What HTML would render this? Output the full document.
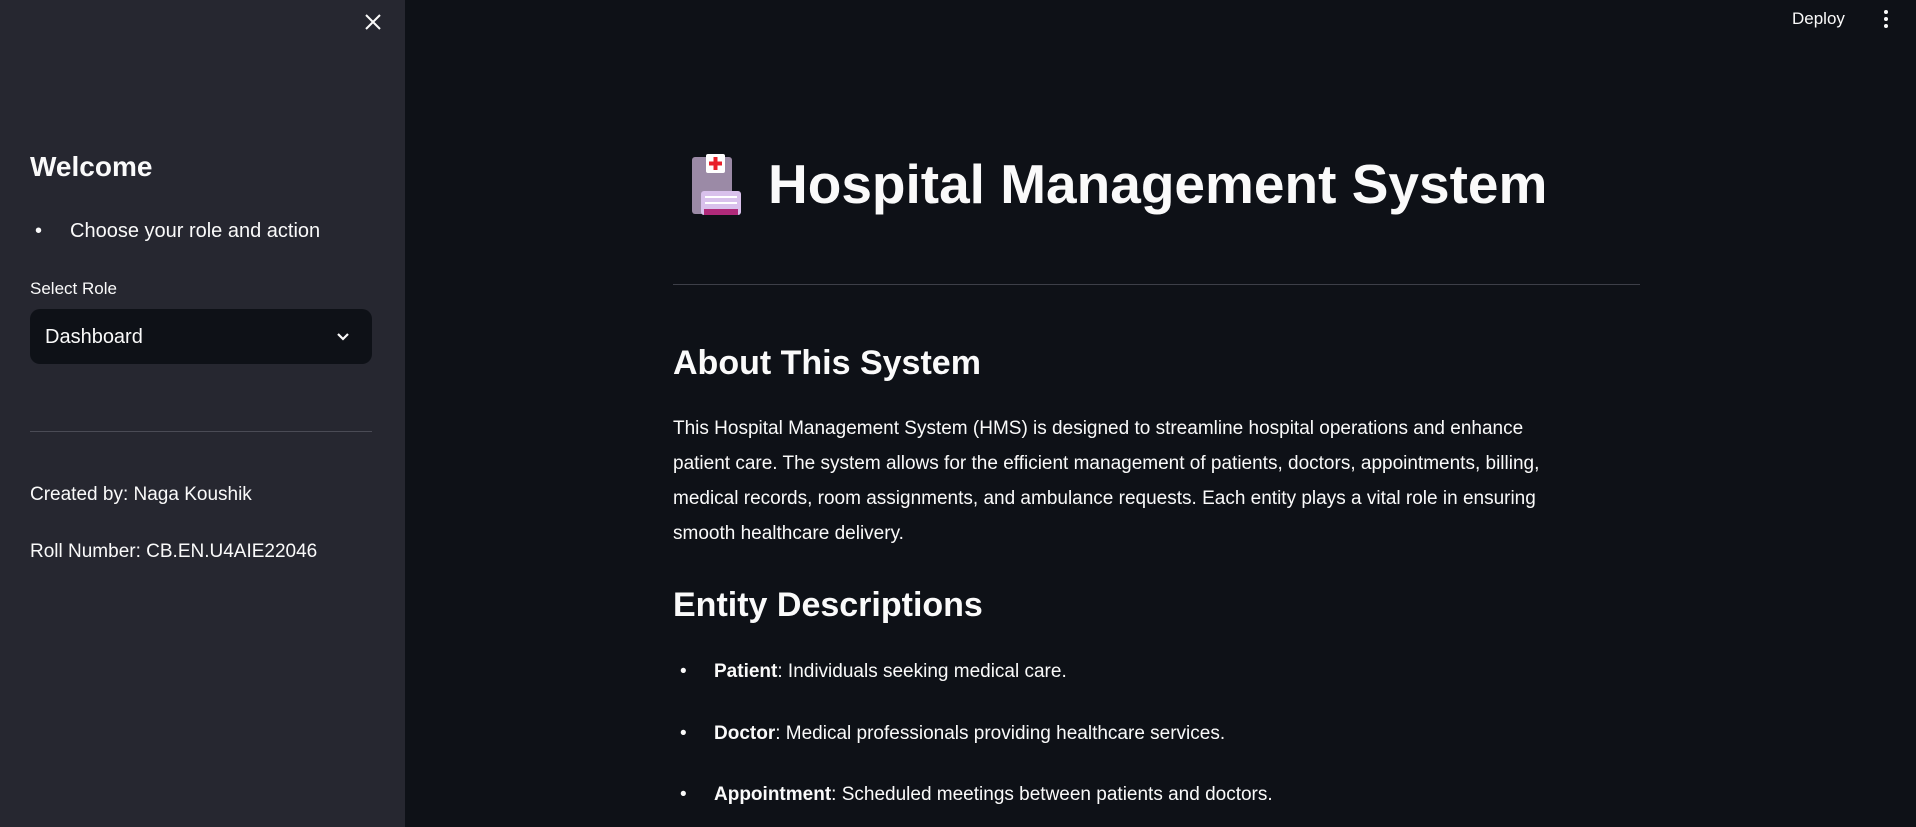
<!DOCTYPE html>
<html><head><meta charset="utf-8"><style>
*{margin:0;padding:0;box-sizing:border-box}
body{width:1916px;height:827px;overflow:hidden;background:#0e1117;color:#fafafa;font-family:"Liberation Sans",sans-serif;position:relative}
.sb{position:absolute;left:0;top:0;width:405px;height:827px;background:#262730}
.a{position:absolute;white-space:nowrap}
p.t{position:absolute;left:673px;width:880px;font-size:19px;line-height:35px}
</style></head><body>
<div class="sb">
<svg class="a" style="left:362px;top:11px" width="22" height="22" viewBox="0 0 22 22"><path d="M4 4L18 18M18 4L4 18" stroke="#fafafa" stroke-width="2"/></svg>
<div class="a" style="left:30px;top:151px;font-size:28px;font-weight:bold">Welcome</div>
<div class="a" style="left:35px;top:220px;font-size:20px">•</div>
<div class="a" style="left:70px;top:220px;font-size:20px">Choose your role and action</div>
<div class="a" style="left:30px;top:279px;font-size:17px">Select Role</div>
<div class="a" style="left:30px;top:309px;width:342px;height:55px;background:#0e1117;border-radius:10px"></div>
<div class="a" style="left:45px;top:326px;font-size:20px">Dashboard</div>
<svg class="a" style="left:335px;top:328px" width="16" height="16" viewBox="0 0 16 16"><path d="M3 6l5 5 5-5" stroke="#fafafa" stroke-width="2.2" fill="none"/></svg>
<div class="a" style="left:30px;top:431px;width:342px;height:1px;background:#4a4b55"></div>
<div class="a" style="left:30px;top:484px;font-size:19px">Created by: Naga Koushik</div>
<div class="a" style="left:30px;top:541px;font-size:19px">Roll Number: CB.EN.U4AIE22046</div>
</div>
<div class="a" style="left:1792px;top:9px;font-size:17px">Deploy</div>
<svg class="a" style="left:1880px;top:8px" width="12" height="22"><circle cx="6" cy="4" r="2" fill="#fafafa"/><circle cx="6" cy="11" r="2" fill="#fafafa"/><circle cx="6" cy="18" r="2" fill="#fafafa"/></svg>
<svg class="a" style="left:688px;top:153px" width="54" height="64" viewBox="0 0 54 64">
<rect x="4" y="4" width="40" height="57" rx="3" fill="#9b8aa6"/>
<rect x="18" y="1" width="19" height="19" rx="2" fill="#fff"/>
<path d="M27.5 4v13M21 10.5h13" stroke="#e8202a" stroke-width="4"/>
<rect x="13" y="38" width="40" height="24" rx="3" fill="#d9c1ec"/>
<rect x="17" y="43" width="32" height="2" fill="#fff"/><rect x="17" y="49" width="32" height="2" fill="#fff"/>
<rect x="16" y="56" width="34" height="6" fill="#b02a7a"/>
</svg>
<div class="a" style="left:768px;top:152px;font-size:55px;font-weight:bold">Hospital Management System</div>
<div class="a" style="left:673px;top:284px;width:967px;height:1px;background:#3d3f48"></div>
<div class="a" style="left:673px;top:344px;font-size:34px;font-weight:bold">About This System</div>
<p class="t" style="top:411px">This Hospital Management System (HMS) is designed to streamline hospital operations and enhance patient care. The system allows for the efficient management of patients, doctors, appointments, billing, medical records, room assignments, and ambulance requests. Each entity plays a vital role in ensuring smooth healthcare delivery.</p>
<div class="a" style="left:673px;top:586px;font-size:34px;font-weight:bold">Entity Descriptions</div>
<div class="a" style="left:680px;top:661px;font-size:19px">•</div><div class="a" style="left:714px;top:661px;font-size:19px"><b>Patient</b>: Individuals seeking medical care.</div>
<div class="a" style="left:680px;top:723px;font-size:19px">•</div><div class="a" style="left:714px;top:723px;font-size:19px"><b>Doctor</b>: Medical professionals providing healthcare services.</div>
<div class="a" style="left:680px;top:784px;font-size:19px">•</div><div class="a" style="left:714px;top:784px;font-size:19px"><b>Appointment</b>: Scheduled meetings between patients and doctors.</div>
</body></html>
